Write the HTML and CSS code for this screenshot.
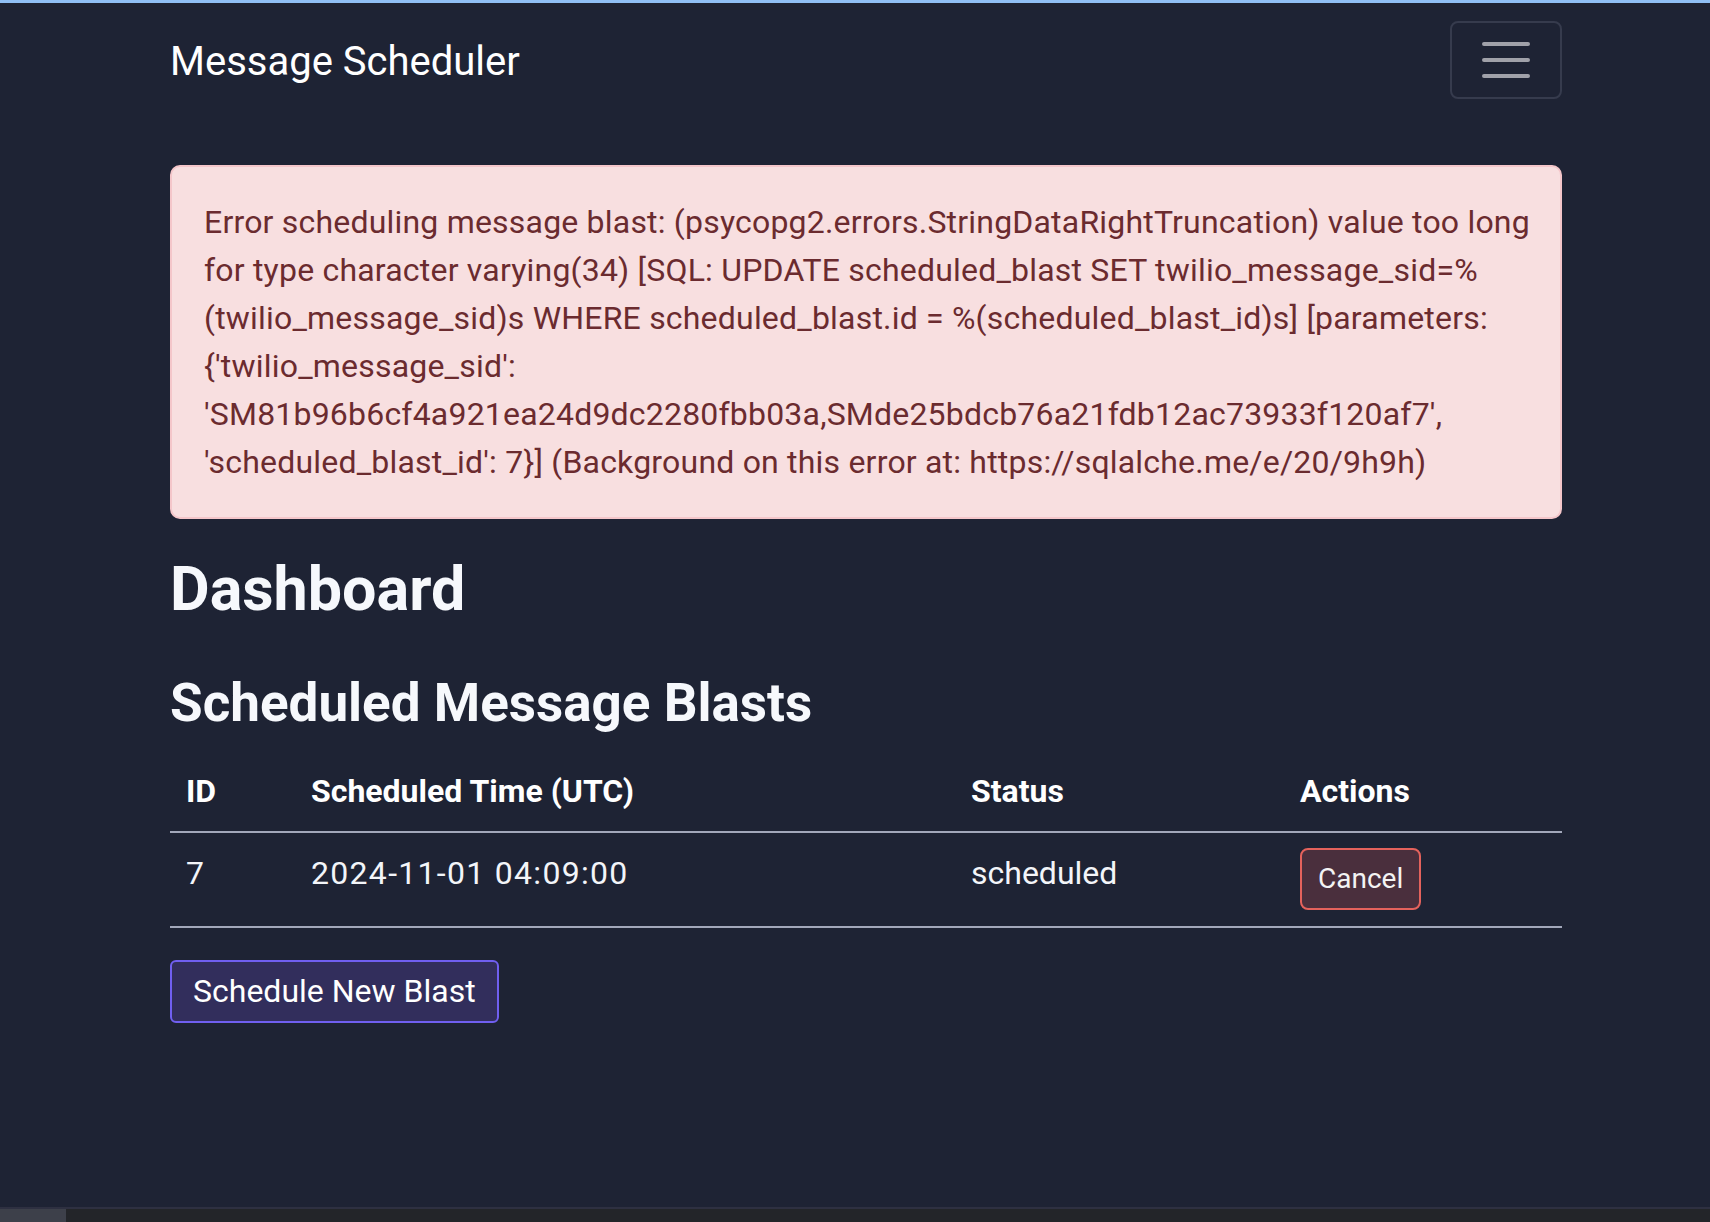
FILE: index.html
```html
<!DOCTYPE html>
<html lang="en">
<head>
<meta charset="utf-8">
<title>Message Scheduler</title>
<link rel="stylesheet" href="styles.css">
</head>
<body>
<div class="page">
  <nav class="navbar">
    <div class="wrap nav-inner">
      <span class="brand">Message Scheduler</span>
      <button class="toggler" type="button" aria-label="Toggle navigation">
        <svg width="60" height="60" viewBox="0 0 30 30" aria-hidden="true"><path d="M4 7h22M4 15h22M4 23h22" stroke="#a0a1a9" stroke-width="2" stroke-linecap="round" fill="none"/></svg>
      </button>
    </div>
  </nav>
  <main class="wrap content">
    <div class="alert">Error scheduling message blast: (psycopg2.errors.StringDataRightTruncation) value too long<br>for type character varying(34) [SQL: UPDATE scheduled_blast SET twilio_message_sid=%<br>(twilio_message_sid)s WHERE scheduled_blast.id = %(scheduled_blast_id)s] [parameters:<br>{'twilio_message_sid':<br>'SM81b96b6cf4a921ea24d9dc2280fbb03a,SMde25bdcb76a21fdb12ac73933f120af7',<br>'scheduled_blast_id': 7}] (Background on this error at: https://sqlalche.me/e/20/9h9h)</div>
    <h1 class="title">Dashboard</h1>
    <h2 class="subtitle">Scheduled Message Blasts</h2>
    <table class="blasts">
      <colgroup>
        <col class="c-id"><col class="c-time"><col class="c-status"><col class="c-actions">
      </colgroup>
      <thead>
        <tr><th>ID</th><th>Scheduled Time (UTC)</th><th>Status</th><th>Actions</th></tr>
      </thead>
      <tbody>
        <tr><td>7</td><td class="time">2024-11-01 04:09:00</td><td>scheduled</td><td><button class="btn-cancel" type="button">Cancel</button></td></tr>
      </tbody>
    </table>
    <a class="btn-new" href="#">Schedule New Blast</a>
  </main>
  <div class="hscroll"><div class="thumb"></div></div>
</div>
</body>
</html>
```
FILE: styles.css
```css
* { box-sizing: border-box; }
html, body { margin: 0; padding: 0; }
body {
  background: #1e2334;
  color: #f3f5f9;
  font-family: Roboto, "Noto Sans", sans-serif;
}
.page {
  height: 100vh;
  display: flex;
  flex-direction: column;
  border-top: 3px solid #90bff5;
}
.wrap {
  margin-left: 170px;
  width: 1392px;
}
.navbar {
  padding: 18px 0;
}
.nav-inner {
  display: flex;
  align-items: center;
  justify-content: space-between;
}
.brand {
  font-size: 40px;
  line-height: 60px;
  padding-top: 4px;
  color: #ffffff;
}
.toggler {
  width: 112px;
  height: 78px;
  border: 2px solid #363b4d;
  border-radius: 8px;
  background: transparent;
  padding: 0;
  display: flex;
  align-items: center;
  justify-content: center;
}
.content {
  flex: 1;
  padding-top: 48px;
}
.alert {
  background: #f8dfe0;
  color: #6b2b2f;
  border: 2px solid #f4c6ca;
  border-radius: 10px;
  padding: 31px 32px;
  font-size: 32px;
  line-height: 48px;
  letter-spacing: 0.2px;
  white-space: nowrap;
}
.title {
  margin: 34px 0 0;
  font-size: 61px;
  line-height: 72px;
  font-weight: 700;
  color: #f6f8fc;
}
.subtitle {
  margin: 48px 0 18px;
  font-size: 53px;
  line-height: 60px;
  font-weight: 700;
  color: #f6f8fc;
}
.blasts {
  width: 1392px;
  table-layout: fixed;
  border-collapse: collapse;
  font-size: 32px;
  line-height: 48px;
}
.c-id { width: 125px; }
.c-time { width: 660px; }
.c-status { width: 329px; }
.c-actions { width: 278px; }
.blasts th, .blasts td {
  text-align: left;
  vertical-align: top;
  padding: 16px;
}
.blasts th {
  font-weight: 700;
  color: #ffffff;
  border-bottom: 2px solid #a2a7ba;
}
.blasts td {
  border-bottom: 2px solid #a2a7ba;
  color: #f3f5f9;
}
.blasts td.time {
  letter-spacing: 1.3px;
}
.btn-cancel {
  display: inline-block;
  vertical-align: top;
  margin-top: -1px;
  height: 62px;
  padding: 0 16px;
  font-family: inherit;
  font-size: 28px;
  line-height: 58px;
  color: #f3f3f3;
  background: #4a2f3d;
  border: 2px solid #e4625c;
  border-radius: 8px;
}
.btn-new {
  display: inline-block;
  margin-top: 32px;
  height: 63px;
  padding: 0 21px;
  font-size: 32px;
  line-height: 59px;
  color: #ffffff;
  text-decoration: none;
  background: #322e5c;
  border: 2px solid #705ff0;
  border-radius: 6px;
}
.hscroll {
  height: 15px;
  background: #232529;
  border-top: 2px solid #2e3041;
}
.thumb {
  width: 66px;
  height: 13px;
  background: #3d404a;
}
```
